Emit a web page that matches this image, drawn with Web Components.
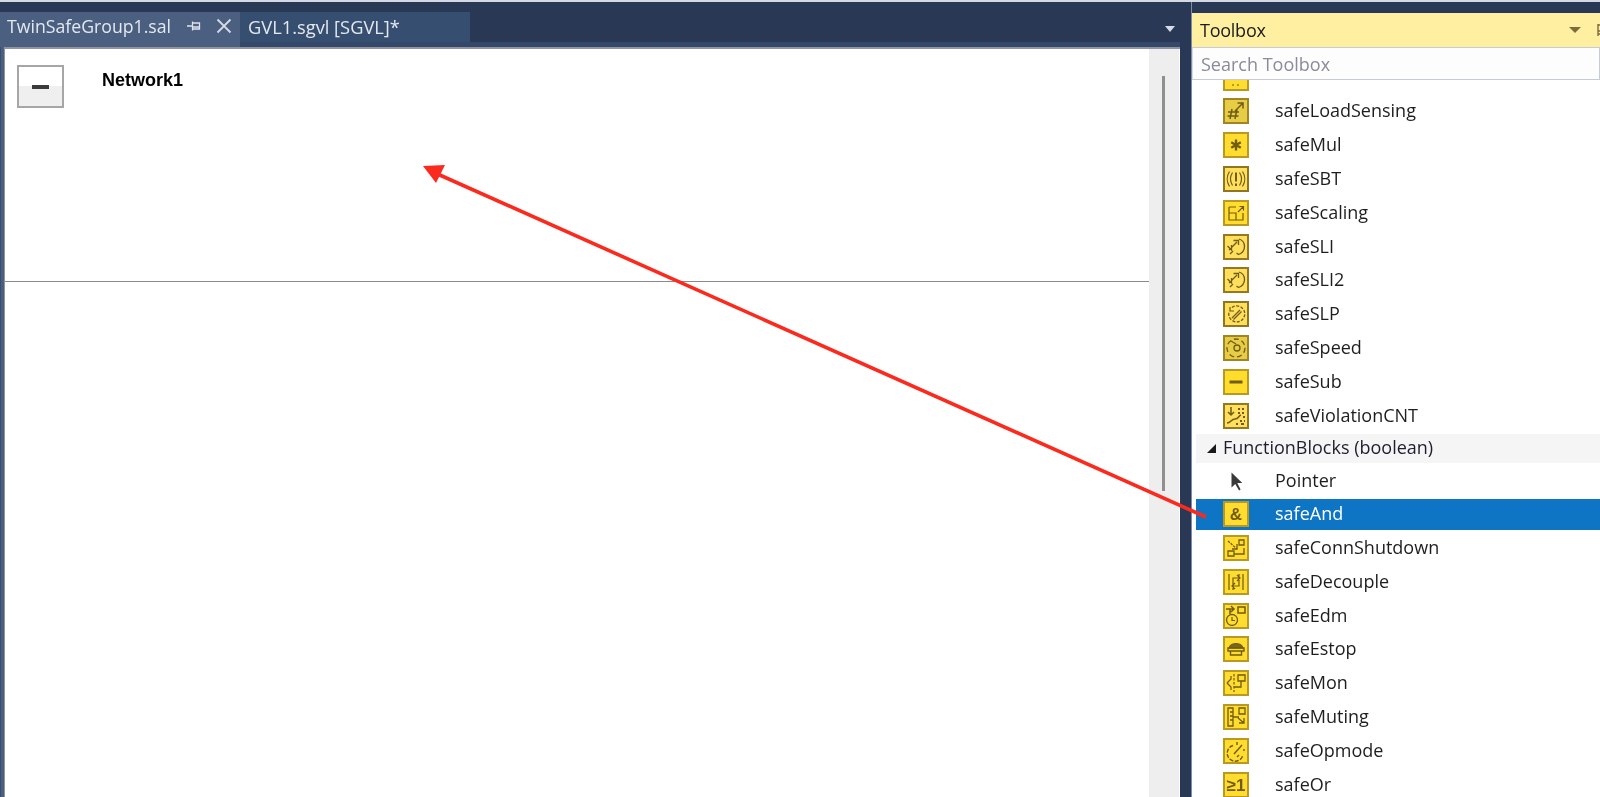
<!DOCTYPE html>
<html>
<head>
<meta charset="utf-8">
<title>Toolbox</title>
<style>
  html, body { margin: 0; padding: 0; height: 100%; overflow: hidden; background: #293955; }
</style>
</head>
<body>

<template id="shell">
  <style>
    :host { display: block; position: relative; width: 1600px; height: 797px; overflow: hidden; background: #293955; font-family: "Open Sans", "Noto Sans", sans-serif; filter: blur(.35px); }
    .top { height: 2px; background: #d5d9e2; }
    .main { display: flex; height: 795px; }
    svg { position: absolute; left: 0; top: 0; pointer-events: none; }
  </style>
  <div class="top"></div>
  <div class="main"><slot></slot></div>
  <svg width="1600" height="797" viewBox="0 0 1600 797">
    <line x1="1206" y1="517" x2="433" y2="172" stroke="#fb2a1e" stroke-width="3.6"/>
    <polygon points="423,166 445,165 436,183" fill="#fb2a1e"/>
  </svg>
</template>

<template id="well">
  <style>
    :host { display: flex; flex-direction: column; width: 1180px; margin-right: 11px; padding-top: 10px; box-sizing: border-box; flex: none; }
    .tabs { display: flex; height: 30px; flex: none; align-items: stretch; position: relative; }
    .drop { margin-left: auto; margin-right: 4px; width: 12px; display: flex; align-items: center; justify-content: center; }
    .drop i { border: 5px solid transparent; border-top: 6px solid #d6dbe4; border-bottom: 0; margin-top: 4px; }
    .rule { height: 5px; flex: none; background: linear-gradient(90deg, #4b5f80 240px, #33486a 240px); }
    .body { flex: 1; min-height: 0; display: flex; padding-left: 4px; background: #4b5f80; box-shadow: inset 1px 0 #3b4e6c; }
    .body ::slotted(*) { flex: 1; }
  </style>
  <div class="tabs"><slot name="tab"></slot><div class="drop"><i></i></div></div>
  <div class="rule"></div>
  <div class="body"><slot></slot></div>
</template>

<template id="tab">
  <style>
    :host { display: flex; align-items: center; box-sizing: border-box; color: #e4e8ef; font-size: 18.3px; padding: 0 0 2px 8px; background: #364e6f; }
    :host([active]) { background: #4b5f80; padding-left: 7px; font-size: 17.7px; }
    :host([active]) .tools { display: flex; }
    .tools { display: none; align-items: center; margin-left: 16px; gap: 15px; }
  </style>
  <slot></slot>
  <div class="tools">
    <svg width="14" height="12" viewBox="0 0 14 12" fill="none" stroke="#dfe4ec" stroke-width="1.3"><path d="M0 6h5M5.500 1.500v9M5.500 3h7v6h-7M5.500 7h7"/></svg>
    <svg width="16" height="16" viewBox="0 0 16 16" stroke="#d4d9e2" stroke-width="1.9"><path d="M1.500 1.500l13 13M14.500 1.500l-13 13"/></svg>
  </div>
</template>

<template id="editor">
  <style>
    :host { display: flex; background: #fff; border-top: 2px solid #8f949e; border-left: 1px solid #8f949e; min-height: 0; }
    .canvas { flex: 1; min-width: 0; }
    .net { height: 233px; border-bottom: 1px solid #8a8a8a; padding: 16px 0 0 12px; box-sizing: border-box; display: flex; align-items: flex-start; }
    .btn { width: 47px; height: 43px; box-sizing: border-box; border: 2px solid #a6a6a6; background: linear-gradient(#fff 50%, #efefef 50%); display: flex; align-items: center; justify-content: center; flex: none; }
    .btn i { display: block; width: 17px; height: 4px; background: #3c3c3c; }
    .title { margin-left: 38px; font: bold 18px/1 "Liberation Sans", Arial, sans-serif; color: #000; margin-top: 6px; }
    .scroll { width: 31px; flex: none; background: #eeeeee; padding-top: 27px; box-sizing: border-box; border-right: 1px solid #fff; }
    .scroll i { display: block; width: 3px; height: 415px; background: #8f8f8f; margin-left: 13px; }
  </style>
  <div class="canvas">
    <div class="net">
      <div class="btn"><i></i></div>
      <div class="title"><slot></slot></div>
    </div>
  </div>
  <div class="scroll"><i></i></div>
</template>

<template id="toolbox">
  <style>
    :host { display: flex; flex-direction: column; width: 409px; padding-top: 11px; box-sizing: border-box; flex: none; border-left: 1px solid #7f8ca6; }
    .head { height: 34px; flex: none; background: #fff0a1; display: flex; align-items: center; padding: 0 0 0 8px; font-size: 18px; color: #1a1a1a; overflow: hidden; }
    .head span { flex: 1; letter-spacing: -.25px; }
    .head i { border: 6px solid transparent; border-top: 6px solid #7c6c3c; border-bottom: 0; margin-right: 16px; flex: none; }
    .head svg { flex: none; margin-right: -11px; }
    .search { height: 33px; flex: none; background: #fdfdfe; border: 1px solid #c6cbd8; border-left-color: #d6dae4; box-sizing: border-box; display: flex; align-items: center; padding: 1px 0 0 8px; color: #8b8b99; font-size: 18px; }
    .list { flex: 1; min-height: 0; overflow: hidden; background: #fff; padding-left: 4px; }
    .inner { display: flex; flex-direction: column; gap: 2.83px; margin-top: -18px; }
  </style>
  <div class="head"><span>Toolbox</span><i></i>
    <svg width="14" height="14" viewBox="0 0 14 14" fill="none" stroke="#7c6c3c" stroke-width="1.4"><path d="M1 1v12M1 2h8v9H1M1 8h8"/></svg>
  </div>
  <div class="search">Search Toolbox</div>
  <div class="list"><div class="inner"><slot></slot></div></div>
</template>

<template id="item">
  <style>
    :host { display: flex; align-items: center; height: 31px; color: #1e1e1e; font-size: 18px; padding-left: 27px; box-sizing: border-box; }
    :host([selected]) { background: #0e75c4; color: #fff; }
    .ic { width: 26px; height: 26px; flex: none; margin-right: 26px; display: block; }
    .tx { margin-top: -2px; }
  </style>
  <span class="ic"></span><span class="tx"><slot></slot></span>
</template>

<template id="group">
  <style>
    :host { display: flex; align-items: center; height: 29px; margin: -.5px 0 -.3px; background: #f5f5f5; color: #1e1e2e; font-size: 18px; box-sizing: border-box; padding-left: 11px; }
    i { border-style: solid; border-width: 0 0 9px 9px; border-color: transparent transparent #1a1a1a transparent; margin-right: 7px; }
    span { margin-top: -2px; }
  </style>
  <i></i><span><slot></slot></span>
</template>

<vs-shell>
  <doc-well>
    <doc-tab slot="tab" active style="width:240px">TwinSafeGroup1.sal</doc-tab>
    <doc-tab slot="tab" style="width:230px">GVL1.sgvl [SGVL]*</doc-tab>
    <fbd-editor>Network1</fbd-editor>
  </doc-well>
  <tool-box>
    <tool-item icon="top"></tool-item>
    <tool-item icon="load">safeLoadSensing</tool-item>
    <tool-item icon="mul">safeMul</tool-item>
    <tool-item icon="sbt">safeSBT</tool-item>
    <tool-item icon="scaling">safeScaling</tool-item>
    <tool-item icon="sli">safeSLI</tool-item>
    <tool-item icon="sli2">safeSLI2</tool-item>
    <tool-item icon="slp">safeSLP</tool-item>
    <tool-item icon="speed">safeSpeed</tool-item>
    <tool-item icon="sub">safeSub</tool-item>
    <tool-item icon="viol">safeViolationCNT</tool-item>
    <tool-group>FunctionBlocks (boolean)</tool-group>
    <tool-item icon="pointer" style="margin-bottom:-.3px">Pointer</tool-item>
    <tool-item icon="and" selected>safeAnd</tool-item>
    <tool-item icon="conn">safeConnShutdown</tool-item>
    <tool-item icon="decouple">safeDecouple</tool-item>
    <tool-item icon="edm">safeEdm</tool-item>
    <tool-item icon="estop">safeEstop</tool-item>
    <tool-item icon="mon">safeMon</tool-item>
    <tool-item icon="muting">safeMuting</tool-item>
    <tool-item icon="opmode">safeOpmode</tool-item>
    <tool-item icon="or">safeOr</tool-item>
  </tool-box>
</vs-shell>

<script>
// glyphs sit on the yellow tile, 26 x 26
const ICONS = {
  top: { glyph: '<path d="M9 20h2M14 20h2"/>' },
  load: { fill: '#e6cd45', edge: '#a08522', glyph: '<path d="M9 11l-2 10M14 11l-2 10M5 14h11M4.500 18h11M12 13l8-8M14.500 5h5.500v5.500" stroke-width="1.500"/>' },
  mul: { glyph: '<path d="M13 7.500v11M8.200 10.300l9.600 5.400M17.800 10.300l-9.600 5.400" stroke-width="2.400"/>' },
  sbt: { fill: '#ffdf5c', edge: '#8f7621', glyph: '<path d="M13 6.500v9M13 17.500v2.500" stroke-width="2"/><path d="M9.500 6.500c-2.500 4-2.500 9 0 13M16.500 6.500c2.500 4 2.500 9 0 13M6.500 5.500c-3 4.500-3 10.500 0 15M19.500 5.500c3 4.500 3 10.500 0 15" stroke-width="1.200"/>' },
  scaling: { glyph: '<path d="M6 7h7M6 7v13h14v-7M6 13h7v7M15 12l5-5M16.500 6.500h4v4" stroke-width="1.200"/>' },
  sli: { fill: '#ffdf5c', edge: '#94791f', glyph: '<path d="M16 5c3.500 1 5.500 4 5.500 7.500 0 3.500-2 6.500-6 8l-2-1.500M6 16l8-8M10.500 6.500l5 0v4.500M4.500 12l4 4v-5M7 20l3-3" stroke-width="1.300"/>' },
  sli2: { fill: '#ffdf5c', edge: '#94791f', glyph: '<path d="M16 5c3.500 1 5.500 4 5.500 7.500 0 3.500-2 6.500-6 8l-2-1.500M6 16l8-8M10.500 6.500l5 0v4.500M4.500 12l4 4v-5M7 20l3-3" stroke-width="1.300"/>' },
  slp: { fill: '#ffdf5c', edge: '#8f7621', glyph: '<path d="M9 6.500a8 8 0 1 1-3 4.500" stroke-width="1.300" stroke-dasharray="3 1.500"/><path d="M9 17l8-8M10.500 18.500l8-8M7 6v4h4" stroke-width="1.200"/>' },
  speed: { fill: '#e6cd45', edge: '#a08522', glyph: '<circle cx="14" cy="13" r="3" stroke-width="1.300"/><circle cx="13" cy="13" r="9" stroke-width="1.300" stroke-dasharray="5 3"/><path d="M8 6l5 3" stroke-width="1.200"/>' },
  sub: { fill: '#ffdd2a', glyph: '<path d="M6.500 13h13" stroke-width="3"/>' },
  viol: { fill: '#ffdf5c', edge: '#94791f', glyph: '<path d="M8 4v8M5 9l3 3 3-3M4 20c4 0 4-4 8-4s3-3 6-4" stroke-width="1.500"/><path d="M15 6h2M19 6h2M15 10h2M19 10h2M20 14h2M17 18h2M21 18h1M13 21h2M18 21h3" stroke-width="1.800"/>' },
  and: { text: '&', size: 17 },
  conn: { glyph: '<path d="M5 6l9 8" stroke-width="1.300" stroke-dasharray="2.500 1"/><path d="M14 9v5h-5M16 5h5v5h-5zM5 16h6v5H5zM11 19h10v-6" stroke-width="1.300"/>' },
  decouple: { glyph: '<path d="M6 5v16M20 5v16M10 21V9h7M14 6l3 3-3 3M16 5v12H9M12 14l-3 3 3 3" stroke-width="1.200"/>' },
  edm: { glyph: '<path d="M3 6h8M8 3l3 3-3 3M7 6v5M15 4h7v6h-7z" stroke-width="1.500"/><circle cx="9" cy="17" r="5.500" stroke-width="1.300"/><path d="M9 14v3.500h3" stroke-width="1.200"/>' },
  estop: { glyph: '<path d="M6 12c0-6 14-6 14 0z" fill="#7a6518" stroke-width="1"/><path d="M5 12h16v3H5zM7.500 15h11v4h-11z" stroke-width="1.400"/>' },
  mon: { glyph: '<path d="M11 4v18" stroke-width="1.200" stroke-dasharray="2.500 1.500"/><path d="M4 13l4-4V6M4 13l4 4v3" stroke-width="1.200"/><path d="M15 5h7v6h-7zM18 11v6h-7" stroke-width="1.300"/>' },
  muting: { glyph: '<path d="M5 4h5v18H5zM7 8h3M7 12h3M7 16h3M10 13h6M16 4h6v6h-6zM15 14l6 5M21 14v5h-5" stroke-width="1.300"/>' },
  opmode: { glyph: '<path d="M10 7.500A8 8 0 1 0 20 17" stroke-width="1.400" stroke-dasharray="4 1.500"/><path d="M14 4v3M21 11v2M19 7l-8 9M16 17l-2 2" stroke-width="1.400"/>' },
  or: { text: '\u22651', size: 17 },
};

const tile = (name) => {
  if (name === 'pointer') {
    return `<svg width="26" height="26" viewBox="0 0 26 26"><path d="M8.500 4.500v15l3.800-3.500 3.700 6.500 1.600-1-3.300-6.500h5z" fill="#3a3a3a"/></svg>`;
  }
  const ic = ICONS[name] || {};
  const fill = ic.fill || '#ffdc2e';
  const edge = ic.edge || '#b79a1f';
  const inner = ic.text
    ? `<text x="13" y="19" text-anchor="middle" font-family="Liberation Sans, Arial, sans-serif" font-weight="bold" font-size="${ic.size}" fill="#6f5c15">${ic.text.replace('&', '&amp;')}</text>`
    : `<g fill="none" stroke="#6f5c15">${ic.glyph || ''}</g>`;
  return `<svg width="26" height="26" viewBox="0 0 26 26"><rect x="1" y="1" width="24" height="24" fill="${fill}" stroke="${edge}" stroke-width="2"/>${inner}</svg>`;
};

const stamp = (el, id) => {
  const root = el.attachShadow({ mode: 'open' });
  root.appendChild(document.getElementById(id).content.cloneNode(true));
  return root;
};

class VsShell extends HTMLElement { constructor() { super(); stamp(this, 'shell'); } }
class DocWell extends HTMLElement { constructor() { super(); stamp(this, 'well'); } }
class DocTab extends HTMLElement { constructor() { super(); stamp(this, 'tab'); } }
class FbdEditor extends HTMLElement { constructor() { super(); stamp(this, 'editor'); } }
class ToolBox extends HTMLElement { constructor() { super(); stamp(this, 'toolbox'); } }
class ToolGroup extends HTMLElement { constructor() { super(); stamp(this, 'group'); } }

class ToolItem extends HTMLElement {
  constructor() {
    super();
    stamp(this, 'item');
  }
  connectedCallback() {
    this.shadowRoot.querySelector('.ic').innerHTML = tile(this.getAttribute('icon'));
  }
}

customElements.define('vs-shell', VsShell);
customElements.define('doc-well', DocWell);
customElements.define('doc-tab', DocTab);
customElements.define('fbd-editor', FbdEditor);
customElements.define('tool-box', ToolBox);
customElements.define('tool-group', ToolGroup);
customElements.define('tool-item', ToolItem);
</script>
</body>
</html>
